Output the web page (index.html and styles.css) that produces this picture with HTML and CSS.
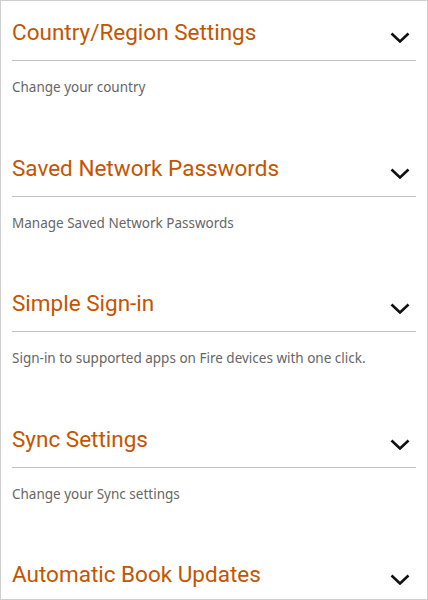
FILE: index.html
```html
<!DOCTYPE html>
<html lang="en">
<head>
    <meta charset="UTF-8">
    <meta name="viewport" content="width=device-width, initial-scale=1.0">
    <title>Settings</title>
    <link rel="stylesheet" href="styles.css">
</head>
<body>
    <div class="page">
        <div class="section">
            <div class="header">
                <h2 class="title">Country/Region Settings</h2>
                <svg class="chevron" viewBox="0 0 20 11"><path d="M1.5 1.5 L10 9.5 L18.5 1.5"/></svg>
            </div>
            <p class="desc">Change your country</p>
        </div>
        <div class="section">
            <div class="header">
                <h2 class="title">Saved Network Passwords</h2>
                <svg class="chevron" viewBox="0 0 20 11"><path d="M1.5 1.5 L10 9.5 L18.5 1.5"/></svg>
            </div>
            <p class="desc">Manage Saved Network Passwords</p>
        </div>
        <div class="section">
            <div class="header">
                <h2 class="title">Simple Sign-in</h2>
                <svg class="chevron" viewBox="0 0 20 11"><path d="M1.5 1.5 L10 9.5 L18.5 1.5"/></svg>
            </div>
            <p class="desc">Sign-in to supported apps on Fire devices with one click.</p>
        </div>
        <div class="section">
            <div class="header">
                <h2 class="title">Sync Settings</h2>
                <svg class="chevron" viewBox="0 0 20 11"><path d="M1.5 1.5 L10 9.5 L18.5 1.5"/></svg>
            </div>
            <p class="desc">Change your Sync settings</p>
        </div>
        <div class="section last">
            <div class="header">
                <h2 class="title">Automatic Book Updates</h2>
                <svg class="chevron" viewBox="0 0 20 11"><path d="M1.5 1.5 L10 9.5 L18.5 1.5"/></svg>
            </div>
        </div>
    </div>
</body>
</html>
```

FILE: styles.css
```css
html, body {
    margin: 0;
    padding: 0;
    background: #ffffff;
    overflow: hidden;
}
body {
    height: 600px;
    box-sizing: border-box;
    border: 1px solid #cfcfcf;
}
.page {
    padding: 0 11px;
}
.section {
    padding: 16px 0 39.5px;
}
.section.last {
    padding-bottom: 0;
}
.header {
    display: flex;
    justify-content: space-between;
    align-items: flex-start;
    height: 43px;
    border-bottom: 1px solid #c4c4c4;
}
.section.last .header {
    height: 38px;
    border-bottom: none;
}
.title {
    margin: 0;
    font-family: Roboto, "Liberation Sans", sans-serif;
    font-weight: 400;
    font-size: 22.5px;
    line-height: 30px;
    color: #c45500;
}
.chevron {
    width: 20px;
    height: 11px;
    margin: 15px 6px 0 0;
    fill: none;
    stroke: #111111;
    stroke-width: 2.6;
}
.desc {
    margin: 16px 0 0;
    font-family: "Noto Sans", "Open Sans", sans-serif;
    font-size: 13.5px;
    line-height: 20px;
    color: #666666;
}
```
